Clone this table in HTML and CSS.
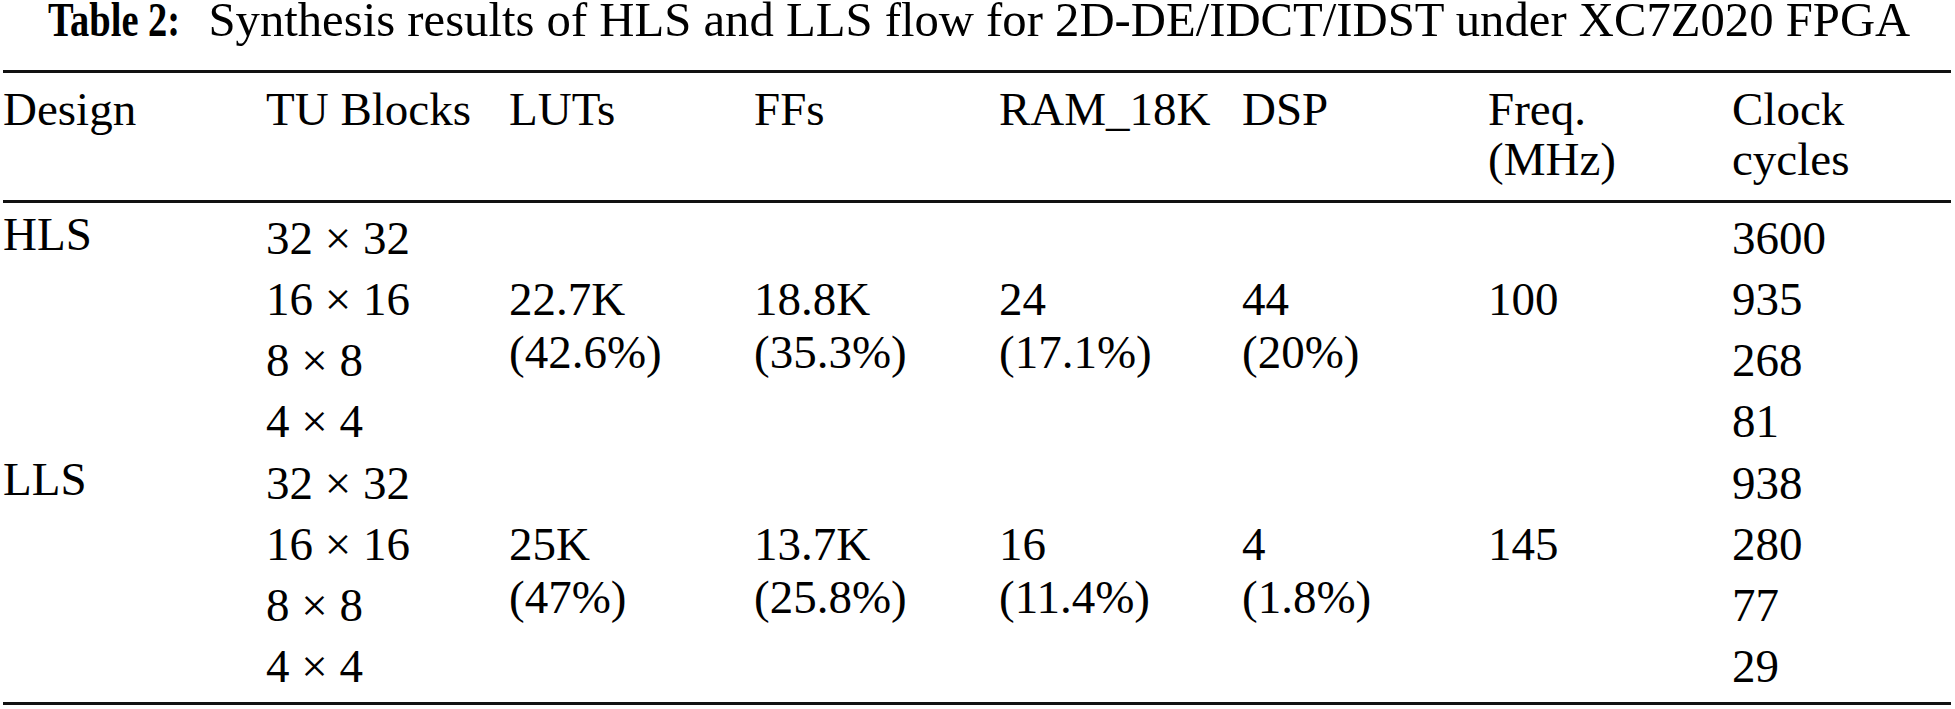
FILE: index.html
```html
<!DOCTYPE html>
<html>
<head>
<meta charset="utf-8">
<title>Table 2</title>
<link rel="stylesheet" href="styles.css">
</head>
<body>
<div class="page">
  <div class="caption"><span class="label">Table 2:</span> Synthesis results of HLS and LLS flow for 2D-DE/IDCT/IDST under XC7Z020 FPGA</div>
  <div class="table">
    <div class="row head">
      <div class="cell">Design</div>
      <div class="cell">TU Blocks</div>
      <div class="cell">LUTs</div>
      <div class="cell">FFs</div>
      <div class="cell">RAM_18K</div>
      <div class="cell">DSP</div>
      <div class="cell">Freq.<br>(MHz)</div>
      <div class="cell">Clock<br>cycles</div>
    </div>
    <div class="body">
      <div class="row group">
        <div class="cell design">HLS</div>
        <div class="cell tu r1">32 × 32</div>
        <div class="cell tu r2">16 × 16</div>
        <div class="cell tu r3">8 × 8</div>
        <div class="cell tu r4">4 × 4</div>
        <div class="cell merged c3">22.7K<br>(42.6%)</div>
        <div class="cell merged c4">18.8K<br>(35.3%)</div>
        <div class="cell merged c5">24<br>(17.1%)</div>
        <div class="cell merged c6">44<br>(20%)</div>
        <div class="cell merged c7">100</div>
        <div class="cell clk r1">3600</div>
        <div class="cell clk r2">935</div>
        <div class="cell clk r3">268</div>
        <div class="cell clk r4">81</div>
      </div>
      <div class="row group">
        <div class="cell design">LLS</div>
        <div class="cell tu r1">32 × 32</div>
        <div class="cell tu r2">16 × 16</div>
        <div class="cell tu r3">8 × 8</div>
        <div class="cell tu r4">4 × 4</div>
        <div class="cell merged c3">25K<br>(47%)</div>
        <div class="cell merged c4">13.7K<br>(25.8%)</div>
        <div class="cell merged c5">16<br>(11.4%)</div>
        <div class="cell merged c6">4<br>(1.8%)</div>
        <div class="cell merged c7">145</div>
        <div class="cell clk r1">938</div>
        <div class="cell clk r2">280</div>
        <div class="cell clk r3">77</div>
        <div class="cell clk r4">29</div>
      </div>
    </div>
  </div>
</div>
</body>
</html>
```

FILE: styles.css
```css
html, body {
  margin: 0;
  padding: 0;
  background: #ffffff;
}

.page {
  width: 1955px;
  font-family: "Liberation Serif", "Times New Roman", serif;
  font-size: 47px;
  color: #000000;
}

.caption {
  font-size: 48.7px;
  line-height: 40px;
  padding-left: 48px;
  white-space: nowrap;
  margin-bottom: 30px;
}

.caption .label {
  display: inline-block;
  font-weight: bold;
  transform: scaleX(0.79);
  transform-origin: left center;
  margin-right: -19px;
}

.table {
  margin-left: 3px;
  width: 1948px;
  border-top: 3px solid #111;
  border-bottom: 3px solid #111;
}

.row {
  display: grid;
  grid-template-columns: 263px 243px 245px 245px 243px 246px 244px 1fr;
}

.head {
  line-height: 50px;
  padding: 11px 0 16px;
  border-bottom: 3px solid #111;
}

.cell {
  white-space: nowrap;
}

.body {
  padding: 4.5px 0;
}

.group {
  grid-template-rows: repeat(4, 61.25px);
  line-height: 61.25px;
}

.design {
  grid-column: 1;
  grid-row: 1 / span 4;
  align-self: start;
  line-height: 52px;
}

.tu { grid-column: 2; }
.clk { grid-column: 8; }

.r1 { grid-row: 1; }
.r2 { grid-row: 2; }
.r3 { grid-row: 3; }
.r4 { grid-row: 4; }

.merged {
  grid-row: 2 / span 2;
  line-height: 53px;
  padding-top: 4px;
}

.c3 { grid-column: 3; }
.c4 { grid-column: 4; }
.c5 { grid-column: 5; }
.c6 { grid-column: 6; }
.c7 { grid-column: 7; }
```
